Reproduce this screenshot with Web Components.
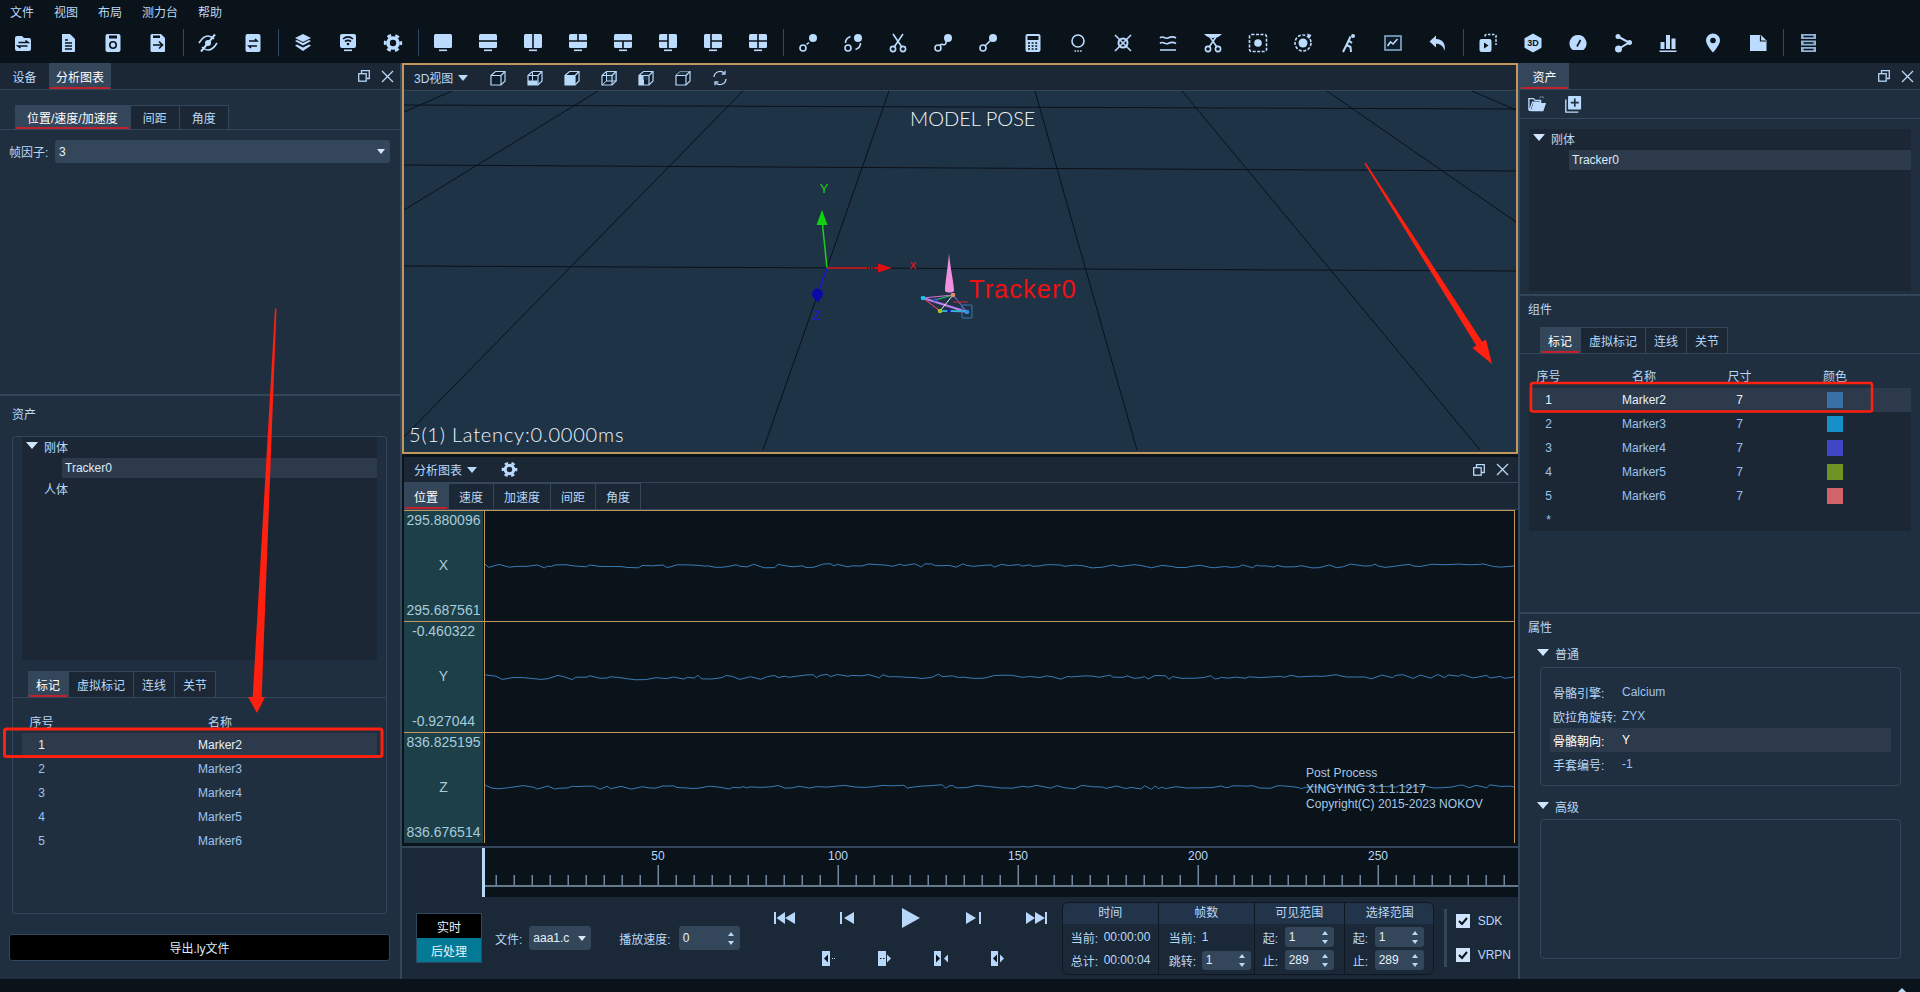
<!DOCTYPE html>
<html lang="zh">
<head>
<meta charset="utf-8">
<title>XINGYING</title>
<style>
  html, body { margin: 0; height: 100%; overflow: hidden; background: #0a121a; }
  body { font: 12px "Liberation Sans", "Noto Sans CJK SC", sans-serif; color: #b8d8f8; }
</style>
</head>
<body>
<xy-app>
  <xy-menubar slot="menu" items="文件,视图,布局,测力台,帮助"></xy-menubar>
  <xy-toolbar slot="menu"></xy-toolbar>
  <xy-left-dock slot="left"></xy-left-dock>
  <xy-view3d slot="center"></xy-view3d>
  <xy-chart-panel slot="center"></xy-chart-panel>
  <xy-timeline slot="center"></xy-timeline>
  <xy-transport slot="center"></xy-transport>
  <xy-right-dock slot="right"></xy-right-dock>
  <xy-marks slot="over"></xy-marks>
</xy-app>

<script>
// shared colours
const PANEL = '#202f3f', BAR = '#1b2735', DARK = '#0a121a', LINE = '#34465a', HILITE = '#2d3a4b', ORANGE = '#c2965f';

// small base class, every element renders once when it is attached
class XyBase extends HTMLElement {
  connectedCallback() {
    if (this.shadowRoot) return;
    this.attachShadow({ mode: 'open' });
    this.shadowRoot.innerHTML = `<style>${this.css()}</style>${this.html()}`;
  }
  css() { return ''; }
  html() { return '<slot></slot>'; }
  attr(name, def) { return this.hasAttribute(name) ? this.getAttribute(name) : def; }
}

// toolbar icons, 20x20. class k = cut out in the bar colour, class s = outline
const mon = (cuts) => `<rect x="1" y="1" width="18" height="14" rx="1.5"/><rect x="6" y="16.5" width="8" height="1.6"/><path class="k" d="${cuts}"/>`;
const ring = '<circle class="s" cx="5" cy="15" r="3"/><circle cx="15" cy="5" r="4"/>';
const snips = '<circle class="s" cx="5" cy="16" r="2.6"/><circle class="s" cx="15" cy="16" r="2.6"/>';
const ICONS = {
  openswap: '<path d="M2 5a2 2 0 0 1 2-2h5l2 2h5a2 2 0 0 1 2 2v9a2 2 0 0 1-2 2H4a2 2 0 0 1-2-2z"/><path class="k" d="M5.5 9.5H15L12.5 7.5M14.5 13H5l2.5 2"/>',
  doc: '<path d="M4 1h8l5 5v12a1 1 0 0 1-1 1H4z"/><path class="k" d="M7 10h7M7 13h7M7 16h7M7 7h3"/>',
  saveas: '<rect x="2.5" y="1" width="15" height="18" rx="2"/><rect class="c" x="6" y="2.5" width="8" height="3"/><circle class="k" cx="10" cy="12" r="3.2"/>',
  saveto: '<path d="M4 1h9l4 4v13a1 1 0 0 1-1 1H4a1.5 1.5 0 0 1-1.5-1.5v-15A1.5 1.5 0 0 1 4 1z"/><rect class="c" x="5" y="2.5" width="7" height="2.5"/><path class="k" d="M5 12h9.5M11 8.5l3.5 3.5-3.5 3.5"/>',
  eyeoff: '<path class="s" d="M1 10c3-5 6-7 9-7 2 0 4 1 6 3M19 10c-3 5-6 7-9 7-2 0-4-1-6-3"/><circle cx="10" cy="10" r="3"/><path class="s" style="stroke-width:2" d="M17 1.5L3 18.5"/>',
  swapdoc: '<rect x="2.5" y="1" width="15" height="18" rx="2"/><path class="k" d="M6 8h8l-2-2M14 13H6l2 2"/>',
  layers: '<path d="M10 1l8 4-8 4-8-4z"/><path d="M2 8l2-1 6 3 6-3 2 1-8 4.5z"/><path d="M2 12.5l2-1 6 3 6-3 2 1L10 18z"/>',
  wifi: '<rect x="2" y="1" width="16" height="14" rx="2"/><rect x="6" y="16.5" width="8" height="1.6"/><path class="k" d="M5 6c3-2.5 7-2.5 10 0M7 8.5c2-1.5 4-1.5 6 0"/><circle class="c" cx="10" cy="11" r="1.3"/>',
  gear: '<circle class="s" style="stroke-width:3.6" cx="10" cy="10" r="5"/><circle class="s" style="stroke-width:2.8" cx="10" cy="10" r="7.8" stroke-dasharray="4 4.17" stroke-dashoffset="2"/>',
  l1: mon(''), l2: mon('M1 8h18'), l3: mon('M10 1v14'), l4: mon('M10 1v7M1 8h18'), l5: mon('M1 8h18M10 8v7'),
  l6: mon('M10 1v14M1 8h9'), l7: mon('M8 1v14M8 8h11'), l8: mon('M10 1v14M1 8h18'),
  j1: ring + '<path class="s" d="M8.5 11.5l2.5-2"/>',
  j2: ring + '<path class="s" d="M2.5 10c0-3 2-5.5 5-6.5M17.5 10c0 3-2 5.5-5 6.5"/>',
  cut: snips + '<path class="s" d="M6.5 13.5L15 1M13.5 13.5L5 1"/>',
  j3: ring + '<path class="s" d="M7 12.5c2-3 3.5 1 5.5-1.5 1.5-2 0-2 .5-3"/>',
  j4: ring + '<path class="s" d="M7.2 12.8l5-5"/>',
  calc: '<rect x="2.5" y="1" width="15" height="18" rx="2"/><rect class="c" x="4.5" y="3" width="11" height="4"/><path class="k" stroke-dasharray="2 1.6" d="M5 10h10M5 13h10M5 16h10"/>',
  ringdots: '<circle class="s" cx="10" cy="8" r="6"/><path class="s" stroke-dasharray="1.6 1.2" d="M6.5 18h8"/>',
  xcircle: '<circle class="s" style="stroke-width:2" cx="10" cy="10" r="4.5"/><path class="s" d="M2 2l16 16M18 2L2 18"/>',
  waves: '<path class="s" d="M2 5c2.5-3 5 1.5 8 0s5-2 8 0M2 10.5c2.5-3 5 1.5 8 0s5-2 8 0M2 17h16"/>',
  cuttop: '<path d="M1 1h18c-3 3-6 4-9 4s-6-1-9-4z"/>' + snips + '<path class="s" d="M6.5 13.5L13 4M13.5 13.5L7 4"/>',
  dotbox: '<rect class="s" x="1.5" y="1.5" width="17" height="17" rx="2" stroke-dasharray="3 1.5"/><circle cx="10" cy="10" r="3.8"/>',
  dotcircle: '<circle class="s" cx="10" cy="10" r="8" stroke-dasharray="3 1.6"/><circle cx="10" cy="10" r="4.5"/><path d="M14 .5l4.5 1.5-2.5 4z"/>',
  stretch: '<circle cx="15" cy="3" r="2"/><path class="s" style="stroke-width:2" d="M12.5 3.5C11 7 9.5 10 8.5 12L5 19M8.5 12l4 2 .5 5M10 7l4 3"/>',
  linebox: '<rect x="2" y="3" width="16" height="14" fill="#0f1c2a" stroke="#8fb3d8" stroke-width="1.5"/><path class="s" d="M4.5 13l3-4 2.5 2 4.5-5"/>',
  undo: '<path d="M8 2.5L1.5 8.5 8 14.5v-3.8c4.5 0 7 2 8.5 7 1.5-6.5-1.5-11.7-8.5-11.7z"/>',
  play3: '<rect x="1.5" y="6" width="12" height="13" rx="2"/><path class="c" d="M6 9.5l4.5 3-4.5 3z"/><path class="s" stroke-dasharray="2.6 1.4" d="M7 3.5V3a1.5 1.5 0 0 1 1.5-1.5h8A1.5 1.5 0 0 1 18 3v9"/>',
  hex3d: '<path d="M10 .5l8.5 4.7v9.6L10 19.5l-8.5-4.7V5.2z"/><text x="10" y="13.3" text-anchor="middle" font-size="9" font-weight="bold" font-family="Liberation Sans" style="fill:#0a121a">3D</text>',
  gauge: '<path d="M10 2a8.5 8.5 0 0 0-6 14.5c.5.5 1 .5 1.5.5h9c.5 0 1 0 1.5-.5A8.5 8.5 0 0 0 10 2z"/><path class="k" d="M9 13.5l3.5-6.5"/>',
  share: '<circle cx="5" cy="3.5" r="2.5"/><circle cx="16.5" cy="9.5" r="2.5"/><circle cx="5.5" cy="16" r="3.5"/><path class="s" style="stroke-width:2" d="M5 3.5l11 6-10.5 6.5"/>',
  bars: '<rect x="2.5" y="9" width="4" height="7"/><rect x="8" y="2" width="4" height="14"/><rect x="13.5" y="5.5" width="4" height="10.5"/><rect x="1.5" y="17.5" width="17" height="1.5"/>',
  pin: '<path d="M10 .5a7 7 0 0 0-7 7c0 4.5 7 12 7 12s7-7.5 7-12a7 7 0 0 0-7-7z"/><circle class="c" cx="10" cy="7.5" r="2.8"/>',
  fold: '<path d="M2 2h11l5.5 5.5V18H2z"/><path class="k" style="stroke-width:1.2" d="M12.5 2.5V8H18"/>',
  server: '<g fill="#8fb3d8"><rect x="3" y="1" width="15" height="5"/><rect x="3" y="7.5" width="15" height="5"/><rect x="3" y="14" width="15" height="5"/></g><path class="k" d="M5.5 3.5h10M5.5 10h10M5.5 16.5h10"/>'
};
const TOOLS = 'openswap doc saveas saveto | eyeoff swapdoc | layers wifi gear | l1 l2 l3 l4 l5 l6 l7 l8 | j1 j2 cut j3 j4 calc ringdots xcircle waves cuttop dotbox dotcircle stretch linebox undo | play3 hex3d gauge share bars pin fold | server';
const ICON_CSS = `svg{display:block;fill:currentColor}
  .k{fill:none;stroke:${DARK};stroke-width:1.6}
  .c{fill:${DARK}}
  .s{fill:none;stroke:currentColor;stroke-width:1.6}`;

class XyApp extends XyBase {
  css() { return `
    :host { display: block; position: relative; width: 1920px; height: 992px; overflow: hidden; background: ${DARK}; }
    .wrap { display: flex; flex-direction: column; height: 100%; }
    .main { flex: 0 0 916px; display: flex; min-height: 0; }
    .center { width: 1116px; flex: none; display: flex; flex-direction: column; background: ${DARK}; }
    .status { flex: 1; position: relative; }
    .status i { position: absolute; left: 1897px; top: 9px; border: 5px solid transparent; border-top: 0; border-bottom: 5px solid #b8d8f8; }
  `; }
  html() { return `<div class="wrap">
      <slot name="menu"></slot>
      <div class="main"><slot name="left"></slot><div class="center"><slot name="center"></slot></div><slot name="right"></slot></div>
      <div class="status"><i></i></div>
    </div><slot name="over"></slot>`; }
}

class XyMenubar extends XyBase {
  css() { return `
    :host { display: flex; height: 22px; background: ${DARK}; padding-left: 10px; align-items: center; color: #b8d8f8; }
    span { margin-right: 20px; }
  `; }
  html() { return this.attr('items', '').split(',').map(t => `<span>${t}</span>`).join(''); }
}

class XyToolbar extends XyBase {
  css() { return `
    :host { display: flex; height: 41px; background: ${DARK}; color: #bcdcff; align-items: center; }
    .b { width: 45px; display: flex; justify-content: center; }
    .sep { width: 1px; height: 27px; background: #2b4a68; margin: 0 1px 0 3px; }
    ${ICON_CSS}
  `; }
  html() {
    return TOOLS.split(' ').map(n => n === '|' ? '<div class="sep"></div>'
      : `<div class="b"><svg width="20" height="20" viewBox="0 0 20 20">${ICONS[n]}</svg></div>`).join('');
  }
}

// restore + close buttons in the corner of a dock
class XyWinButtons extends XyBase {
  css() { return `:host { display: flex; gap: 11px; align-items: center; color: #b8d8f8; } svg { display: block; fill: none; stroke: currentColor; }`; }
  html() { return `
    <svg width="12" height="12" viewBox="0 0 12 12" stroke-width="1.3"><rect x=".7" y="3.7" width="7.5" height="7.5"/><path d="M3.5 3.5V.7h7.8v7.8H8.5"/></svg>
    <svg width="13" height="13" viewBox="0 0 13 13" stroke-width="1.3"><path d="M1 1l11 11M12 1L1 12"/></svg>`; }
}

// tab strip used everywhere: items is a comma list, pads the padding per tab
class XyTabs extends XyBase {
  css() { return `
    :host { display: flex; box-sizing: border-box; border-bottom: 1px solid ${LINE}; background: ${this.attr('bg', 'transparent')}; padding-left: ${this.attr('indent', 0)}px; height: ${this.attr('h', 25)}px; }
    .t { box-sizing: border-box; display: flex; align-items: center; justify-content: center; color: #b8d8f8; background: ${BAR}; border-top: 1px solid ${LINE}; border-right: 1px solid ${LINE}; height: 100%; position: relative; }
    .t.on { background: ${LINE}; color: #fff; }
    .t.on::after { content: ""; position: absolute; left: 1px; right: 1px; bottom: 0; height: 2px; background: #c4202c; }
    :host([flat]) .t { border: 0; }
    .end { margin-left: auto; align-self: center; padding-right: 6px; }
  `; }
  html() {
    const on = +this.attr('active', 0), pads = this.attr('pads', '10').split(',');
    return this.attr('items', '').split(',').map((t, i) => {
      const p = pads[i] || pads[0];
      return `<div class="t ${i === on ? 'on' : ''}" style="padding:0 ${p}px">${t}</div>`;
    }).join('') + '<div class="end"><slot></slot></div>';
  }
}

class XySpin extends XyBase {
  css() { return `
    :host { display: flex; box-sizing: border-box; align-items: center; justify-content: space-between; height: ${this.attr('h', 20)}px; width: ${this.attr('w', 49)}px; background: ${LINE}; border-radius: 3px; padding: 0 6px 0 4px; color: #e6f1fb; }
    .a { display: flex; flex-direction: column; gap: 5px; }
    .a i { display: block; border: 3px solid transparent; border-top: 0; border-bottom: 4px solid #b8d8f8; }
    .a i + i { border-bottom: 0; border-top: 4px solid #b8d8f8; }
  `; }
  html() { return `<span>${this.attr('value', '')}</span><div class="a"><i></i><i></i></div>`; }
}

class XyCombo extends XyBase {
  css() { return `
    :host { display: flex; box-sizing: border-box; align-items: center; justify-content: space-between; height: ${this.attr('h', 24)}px; width: ${this.attr('w', 100)}px; background: ${LINE}; border-radius: 3px; padding: 0 5px 0 4px; color: #e6f1fb; }
    i { border: 4px solid transparent; border-bottom: 0; border-top: 5px solid #d8e8f8; }
  `; }
  html() { return `<span>${this.attr('value', '')}</span><i></i>`; }
}

class XyTree extends XyBase {
  css() { return `
    :host { display: block; box-sizing: border-box; background: ${BAR}; height: ${this.attr('h', 160)}px; }
    .r { display: flex; align-items: center; height: 20px; padding-left: 22px; position: relative; }
    .r.top { height: 21px; box-sizing: border-box; padding-bottom: 2px; }
    .r i { position: absolute; left: 4px; top: 5px; border: 6px solid transparent; border-bottom: 0; border-top: 7px solid #d0e6fc; }
    .sel { background: ${HILITE}; margin-left: 40px; padding-left: 3px; color: #dcecfb; }
  `; }
  html() {
    return `<div class="r top"><i></i>刚体</div><div class="r sel">Tracker0</div>` +
      (this.hasAttribute('people') ? '<div class="r">人体</div>' : '');
  }
}

// marker list. cols gives the grid, dark/full switch on the extra columns of the right dock
class XyMarkerTable extends XyBase {
  css() { return `
    :host { display: block; }
    .r { display: grid; grid-template-columns: ${this.attr('cols', '39px 1fr')}; height: 24px; align-items: center; text-align: center; color: #9cc4ef; }
    .h { color: #b8d8f8; height: ${this.attr('head', 33)}px; align-items: end; padding-bottom: ${this.attr('foot', 3)}px; box-sizing: border-box; }
    .body { background: ${this.hasAttribute('dark') ? BAR : 'transparent'}; }
    .sel { background: ${HILITE}; color: #e6f1fb; }
    .sw { display: block; width: 16px; height: 16px; margin: auto; }
    .star { height: 23px; }
  `; }
  html() {
    const full = this.hasAttribute('full');
    const sw = ['#3a70a6', '#1590ca', '#4146c6', '#709424', '#d0646a'];
    const head = full ? ['序号', '名称', '尺寸', '颜色'] : ['序号', '名称'];
    let rows = '';
    for (let i = 0; i < 5; i++) {
      rows += `<div class="r ${i === 0 ? 'sel' : ''}"><span>${i + 1}</span><span>Marker${i + 2}</span>` +
        (full ? `<span>7</span><span><b class="sw" style="background:${sw[i]}"></b></span>` : '') + '</div>';
    }
    if (full) rows += '<div class="r star"><span>*</span></div>';
    return `<div class="r h">${head.map(t => `<span>${t}</span>`).join('')}</div><div class="body">${rows}</div>`;
  }
}

class XyLeftDock extends XyBase {
  css() { return `
    :host { display: flex; flex-direction: column; width: 402px; flex: none; box-sizing: border-box; background: ${PANEL}; border-right: 2px solid ${LINE}; }
    .top { height: 304px; flex: none; padding-top: 15px; box-sizing: border-box; }
    .frame { display: flex; align-items: center; margin-top: 10px; padding: 0 10px 0 9px; }
    .frame span { width: 46px; }
    .split { height: 2px; background: ${LINE}; flex: none; }
    .title { height: 40px; box-sizing: border-box; padding: 12px 0 0 12px; line-height: 14px; }
    .group { margin: 0 13px 0 12px; height: 478px; box-sizing: border-box; border: 1px solid ${LINE}; border-radius: 3px; padding: 0 9px; }
    .tabs { margin: 11px -9px 0; }
    .exp { margin: 20px 10px 0 9px; height: 27px; box-sizing: border-box; background: #000; border: 1px solid #2f4760; border-radius: 3px; color: #dcecfb; display: flex; align-items: center; justify-content: center; }
  `; }
  html() { return `
    <xy-tabs flat items="设备,分析图表" active="1" pads="12.5,7" bg="${BAR}" h="27"><xy-win-buttons></xy-win-buttons></xy-tabs>
    <div class="top">
      <xy-tabs items="位置/速度/加速度,间距,角度" pads="12" indent="15"></xy-tabs>
      <div class="frame"><span>帧因子:</span><xy-combo value="3" w="335" h="23"></xy-combo></div>
    </div>
    <div class="split"></div>
    <div class="title">资产</div>
    <div class="group">
      <xy-tree people h="223"></xy-tree>
      <div class="tabs"><xy-tabs items="标记,虚拟标记,连线,关节" pads="8" indent="15" h="27"></xy-tabs></div>
      <xy-marker-table cols="39px 318px" head="35"></xy-marker-table>
    </div>
    <div class="exp">导出.ly文件</div>`; }
}

class XyRightDock extends XyBase {
  css() { return `
    :host { display: flex; flex-direction: column; width: 402px; flex: none; box-sizing: border-box; background: ${PANEL}; border-left: 2px solid ${LINE}; color: #b8d8f8; }
    .tools { height: 29px; flex: none; box-sizing: border-box; border-bottom: 1px solid ${LINE}; display: flex; align-items: center; padding-left: 8px; gap: 18px; color: #bcdcff; }
    svg { display: block; fill: currentColor; }
    .p { flex: none; box-sizing: border-box; }
    .a { height: 175px; padding: 10px 9px 0; }
    .split { height: 2px; flex: none; background: ${LINE}; }
    .title { height: 31px; box-sizing: border-box; padding: 7px 0 0 8px; line-height: 14px; }
    .b { height: 285px; }
    .tbl { margin: 0 9px; }
    .sec { display: flex; align-items: center; height: 24px; padding-left: 35px; position: relative; }
    .sec i { position: absolute; left: 17px; top: 8px; border: 6px solid transparent; border-bottom: 0; border-top: 7px solid #d0e6fc; }
    .box { margin: 0 19px 0 20px; border: 1px solid ${LINE}; border-radius: 4px; box-sizing: border-box; }
    .box.one { height: 119px; padding: 12px 9px 0; margin-top: 2px; margin-bottom: 8px; }
    .box.two { height: 140px; margin-top: 1px; }
    .kv { display: grid; grid-template-columns: 69px 1fr; height: 24px; align-items: center; padding-left: 3px; color: #b8d8f8; }
    .kv b { font-weight: 400; color: #9cc4ef; }
    .kv.on { background: ${HILITE}; color: #fff; }
    .kv.on b { color: #fff; }
  `; }
  html() { return `
    <xy-tabs flat items="资产" pads="12.5" bg="${BAR}" h="27"><xy-win-buttons></xy-win-buttons></xy-tabs>
    <div class="tools">
      <svg width="18" height="18" viewBox="0 0 20 20"><path d="M1 17V4h5l2 2h6v2H5L2 17h14l3-8" fill="none" stroke="currentColor" stroke-width="1.5"/><path d="M3 18l3-9h14l-3 9z"/><path d="M13 3c2-2 4-1 5 1" fill="none" stroke="currentColor" stroke-dasharray="2 1"/></svg>
      <svg width="18" height="18" viewBox="0 0 20 20"><path d="M2 5v14h14" fill="none" stroke="currentColor" stroke-width="1.5"/><rect x="4.5" y="1" width="14.5" height="15" rx="1"/><path d="M12 4v9M7.5 8.5h9" stroke="${PANEL}" stroke-width="1.8"/></svg>
    </div>
    <div class="p a"><xy-tree h="162"></xy-tree></div>
    <div class="split"></div>
    <div class="title">组件</div>
    <div class="p b">
      <xy-tabs items="标记,虚拟标记,连线,关节" pads="8" indent="20" h="27"></xy-tabs>
      <div class="tbl"><xy-marker-table full dark cols="39px 152px 39px 152px" head="34" foot="4"></xy-marker-table></div>
    </div>
    <div class="split"></div>
    <div class="title" style="height:27px">属性</div>
    <div class="sec"><i></i>普通</div>
    <div class="box one">
      <div class="kv">骨骼引擎:<b>Calcium</b></div>
      <div class="kv">欧拉角旋转:<b>ZYX</b></div>
      <div class="kv on">骨骼朝向:<b>Y</b></div>
      <div class="kv">手套编号:<b>-1</b></div>
    </div>
    <div class="sec"><i></i>高级</div>
    <div class="box two"></div>`; }
}

// small cube buttons of the 3D view
const cube = (inner) => `<svg width="16" height="16" viewBox="0 0 16 16"><path d="M1 5.5L5.5 1.5H15V11L11 15H1z" fill="#0f1c2a" stroke="currentColor" stroke-width="1.2"/>${inner}<path d="M1 5.5H11V15M11 5.5L15 1.5" fill="none" stroke="currentColor" stroke-width="1.2"/></svg>`;
const CUBES = [
  cube(''),
  cube('<path d="M1 10.5h9.5V15H1z" fill="currentColor"/><path d="M5.5 1.5v9M5.5 10.5L1 15" fill="none" stroke="currentColor"/>'),
  cube('<rect x="1" y="5.5" width="10" height="9.5" fill="currentColor"/>'),
  cube('<rect x="5.5" y="1.5" width="9.5" height="9.5" fill="#1f3347" stroke="currentColor"/><path d="M5.5 11L1 15" stroke="currentColor"/>'),
  cube('<rect x="1" y="5.5" width="5" height="9.5" fill="currentColor"/><rect x="5.5" y="3" width="4.5" height="7" fill="#1f3347"/>'),
  cube('<path d="M1 5.5L5.5 1.5H15L11 5.5z" fill="#1f3347"/>')
];

class XyView3d extends XyBase {
  css() { return `
    :host { display: flex; flex-direction: column; box-sizing: border-box; height: 391px; flex: none; border: 2px solid ${ORANGE}; background: #1f3347; }
    .bar { height: 26px; flex: none; box-sizing: border-box; background: ${BAR}; border-bottom: 1px solid ${LINE}; display: flex; align-items: center; padding-left: 10px; color: #b8d8f8; }
    .arr { border: 5px solid transparent; border-bottom: 0; border-top: 6px solid #b8d8f8; margin: 0 22px 0 5px; }
    .ic { display: flex; gap: 21px; }
    .ic svg { display: block; }
    .cv { flex: 1; position: relative; overflow: hidden; }
    .cv svg { position: absolute; inset: 0; display: block; }
    .pose { position: absolute; left: 506px; top: 17px; font: 300 20px Lato, "Liberation Sans", sans-serif; color: #f4f8fc; line-height: 20px; white-space: nowrap; }
    .lat { position: absolute; left: 5px; bottom: 7px; font: 300 20px Lato, "Liberation Sans", sans-serif; color: #eef4fa; letter-spacing: .8px; white-space: nowrap; line-height: 22px; }
  `; }
  html() {
    const ln = (a, b, c, d, w = 1) => `<line x1="${a}" y1="${b}" x2="${c}" y2="${d}" stroke="#0b1118" stroke-width="${w}"/>`;
    const pts = [[923,298],[953,295],[967,312],[940,311]];
    return `
    <div class="bar"><span>3D视图</span><i class="arr"></i><div class="ic">${CUBES.join('')}
      <svg width="16" height="16" viewBox="0 0 16 16" fill="none" stroke="currentColor" stroke-width="1.3"><path d="M2 7a6 6 0 0 1 10.5-3.5M14 9a6 6 0 0 1-10.5 3.5"/><path d="M13 .8v3.4H9.6M3 15.2v-3.4h3.4"/></svg></div></div>
    <div class="cv">
      <svg width="1112" height="361" viewBox="404 91 1112 361">
        ${ln(404,105,1516,109)}${ln(404,165,1516,171)}${ln(404,266,1516,271)}
        ${ln(452,91,404,112)}${ln(598,91,404,210)}${ln(743,91,404,437)}${ln(889,91,763,450)}
        ${ln(1035,91,1137,450)}${ln(1182,91,1480,450)}${ln(1327,91,1516,222)}${ln(1472,91,1516,110)}
        <line x1="827" y1="268" x2="822" y2="220" stroke="#18d018" stroke-width="1.5"/>
        <path d="M822 210l5.5 15h-11z" fill="#10d010"/>
        <text x="824" y="193" fill="#18d018" font-size="13" text-anchor="middle" font-family="Liberation Sans">Y</text>
        <line x1="827" y1="268" x2="880" y2="268" stroke="#e01818" stroke-width="1.5" stroke-dasharray="40 1 2 1 2 1"/>
        <path d="M878 263.5l14 4.5-14 4.5z" fill="#e01010"/>
        <text x="913" y="269" fill="#e01818" font-size="13" text-anchor="middle" font-family="Liberation Sans">x</text>
        <line x1="827" y1="268" x2="816" y2="298" stroke="#1818e0" stroke-width="1.5"/>
        <path d="M812 294a5.5 5.5 0 0 1 11 0c0 3-4 6-5 9-1-3-6-5-6-9z" fill="#0a0aa8"/>
        <text x="817" y="320" fill="#1818e0" font-size="13" text-anchor="middle" font-family="Liberation Sans">Z</text>
        <path d="M949 253c1 14 5 30 5 38-2 2-7 2-9 0 0-8 3-24 4-38z" fill="#f090e0"/>
        <path d="M923 298L953 295L967 312L940 311Z" fill="none" stroke="#d870d8" stroke-width="1"/>
        <path d="M923 298L967 312" stroke="#c080f0" stroke-width="2"/>
        <path d="M923 298L940 311" stroke="#e03048" stroke-width="1"/>
        <path d="M940 311L953 295" stroke="#f0f0f0" stroke-width="1"/>
        <path d="M935 300L953 295" stroke="#30d070" stroke-width="1"/>
        <path d="M940 311H967" stroke="#18c8d8" stroke-width="1.5"/>
        <path d="M953 295L967 312" stroke="#4060d0" stroke-width="1"/>
        <path d="M953 302H968" stroke="#e02020" stroke-width="1"/>
        ${['#18c0f0','#e88870','#3090e0','#a8c020'].map((c, i) => `<circle cx="${pts[i][0]}" cy="${pts[i][1]}" r="2.3" fill="${c}"/>`).join('')}
        <circle cx="949" cy="311" r="1.8" fill="#1010c0"/><circle cx="935" cy="300" r="1.8" fill="#3050d0"/>
        <rect x="962" y="305" width="10" height="13" rx="1" fill="none" stroke="#3a78b0" stroke-width="1"/>
        <text x="969" y="298" fill="#ee1111" font-size="25.5" letter-spacing="1" font-family="Liberation Sans">Tracker0</text>
      </svg>
      <div class="pose">MODEL POSE</div>
      <div class="lat">5(1) Latency:0.0000ms</div>
    </div>`;
  }
}

// one chart strip: value range on the left, wave to the right
class XyChartRow extends XyBase {
  css() { return `
    :host { display: grid; grid-template-columns: 79px 2px 1fr; height: 111px; box-sizing: border-box; border-top: 1px solid ${ORANGE}; }
    .l { background: #1d3f47; display: flex; flex-direction: column; justify-content: space-between; align-items: center; color: #a8cbdc; font-size: 14px; padding: 1px 0 3px; box-sizing: border-box; white-space: nowrap; overflow: hidden; line-height: 16px; }
    .v { background: ${ORANGE}; width: 1px; justify-self: end; }
    .c { position: relative; min-width: 0; }
    svg { display: block; width: 100%; height: 100%; }
  `; }
  html() { return `
    <div class="l"><span>${this.attr('max')}</span><span>${this.attr('axis')}</span><span>${this.attr('min')}</span></div>
    <div class="v"></div>
    <div class="c"><svg viewBox="0 0 1032 110" preserveAspectRatio="none"><polyline fill="none" stroke="#3a7bb8" stroke-width="1" points="${this.wave()}"/></svg><slot></slot></div>`; }
  wave() {
    // noise from a seeded generator so the strip looks like the same data every time
    let s = +this.attr('seed', 1), out = [], x = 0;
    const amp = +this.attr('amp', 2), mid = +this.attr('mid', 55);
    const rnd = () => (s = (s * 16807) % 2147483647) / 2147483647;
    while (x <= 1032) {
      const y = mid + (rnd() - .5) * amp * 1.8 + Math.sin(x / 90) * .6;
      out.push(x.toFixed(1) + ',' + y.toFixed(1));
      x += 3.5 + Math.floor(rnd() * 3) * 3.5;
    }
    out.push('1032,' + mid);
    return out.join(' ');
  }
}

class XyChartPanel extends XyBase {
  css() { return `
    :host { display: block; height: 392px; flex: none; box-sizing: border-box; padding: 3px 0 0 2px; background: ${DARK}; }
    .t { height: 26px; box-sizing: border-box; background: ${BAR}; border-bottom: 1px solid ${LINE}; display: flex; align-items: center; padding: 0 6px 0 10px; }
    .arr { border: 5px solid transparent; border-bottom: 0; border-top: 6px solid #b8d8f8; margin-left: 5px; }
    .t svg { margin-left: 24px; color: #bcdcff; fill: currentColor; display: block; }
    .end { margin-left: auto; padding-right: 3px; }
    .rows { padding-right: 3px; }
    .note { position: absolute; left: 821px; top: 33px; line-height: 15.5px; font-size: 12.1px; color: #a8c8e4; white-space: nowrap; }
    .edge { position: relative; border-right: 1px solid ${ORANGE}; }
    ${ICON_CSS}
  `; }
  html() { return `
    <div class="t"><span>分析图表</span><i class="arr"></i><svg width="17" height="17" viewBox="0 0 20 20">${ICONS.gear}</svg><div class="end"><xy-win-buttons></xy-win-buttons></div></div>
    <xy-tabs items="位置,速度,加速度,间距,角度" pads="10" bg="${BAR}" h="27"></xy-tabs>
    <div class="rows"><div class="edge">
      <xy-chart-row max="295.880096" axis="X" min="295.687561" seed="17"></xy-chart-row>
      <xy-chart-row max="-0.460322" axis="Y" min="-0.927044" seed="4242" amp="2.5"></xy-chart-row>
      <xy-chart-row max="836.825195" axis="Z" min="836.676514" seed="991" mid="54">
        <div class="note">Post Process<br>XINGYING 3.1.1.1217<br>Copyright(C) 2015-2023 NOKOV</div>
      </xy-chart-row>
    </div></div>`; }
}

class XyTimeline extends XyBase {
  css() { return `
    :host { display: block; height: 51px; flex: none; box-sizing: border-box; border-top: 2px solid ${LINE}; background: ${DARK}; }
    svg { display: block; }
  `; }
  html() {
    // local x = page x - 402
    let ticks = '', labels = '';
    for (let f = 5; f <= 285; f += 5) {
      const x = 76 + f * 3.6, big = f % 50 === 0;
      ticks += `<rect x="${x - .5}" y="${big ? 17 : 27}" width="1.5" height="${big ? 20 : 10}" fill="#7288a0"/>`;
      if (big) labels += `<text x="${x}" y="12" text-anchor="middle" fill="#b8d8f8" font-size="12" font-family="Liberation Sans">${f}</text>`;
    }
    return `<svg width="1116" height="49" viewBox="0 0 1116 49">
      <rect width="80" height="49" fill="#1b2837"/>
      ${labels}${ticks}
      <rect x="80" y="37" width="1036" height="2" fill="#65788e"/>
      <rect x="80" y="0" width="3" height="49" fill="#b8d8f8"/>
    </svg>`;
  }
}

// the table with time, frames, visible and selected range
class XyRangeTable extends XyBase {
  css() { return `
    :host { display: grid; grid-template-columns: 96px 96px 90px 90px; width: 372px; height: 73px; flex: none; box-sizing: border-box; border: 1px solid #0f1822; border-radius: 6px; overflow: hidden; }
    .col { border-right: 1px solid #0f1822; display: flex; flex-direction: column; min-width: 0; }
    .col:last-child { border-right: 0; }
    .h { height: 21px; flex: none; background: #22344a; text-align: center; line-height: 21px; }
    .b { flex: 1; display: flex; flex-direction: column; justify-content: space-around; padding: 2px 0; }
    .r { display: flex; align-items: center; padding-left: 8px; height: 22px; }
    .r em { font-style: normal; width: 33px; flex: none; }
    .col.narrow .r em { width: 22px; }
    .clip { width: 47px; white-space: nowrap; color: #b8d8f8; }
    .r.tight { padding-left: 10px; }
  `; }
  html() { return `
    <div class="col"><div class="h">时间</div><div class="b">
      <div class="r"><em>当前:</em><span class="clip">00:00:00</span></div>
      <div class="r"><em>总计:</em><span class="clip">00:00:04</span></div></div></div>
    <div class="col"><div class="h">帧数</div><div class="b">
      <div class="r tight"><em>当前:</em><span>1</span></div>
      <div class="r tight"><em>跳转:</em><xy-spin value="1" h="19"></xy-spin></div></div></div>
    <div class="col narrow"><div class="h">可见范围</div><div class="b">
      <div class="r"><em>起:</em><xy-spin value="1"></xy-spin></div>
      <div class="r"><em>止:</em><xy-spin value="289"></xy-spin></div></div></div>
    <div class="col narrow"><div class="h">选择范围</div><div class="b">
      <div class="r"><em>起:</em><xy-spin value="1"></xy-spin></div>
      <div class="r"><em>止:</em><xy-spin value="289"></xy-spin></div></div></div>`; }
}

class XyCheck extends XyBase {
  css() { return `
    :host { display: flex; align-items: center; gap: 8px; color: #b8d8f8; }
    .b { width: 14px; height: 14px; background: #cfe4fa; display: flex; }
    svg { display: block; }
  `; }
  html() { return `<div class="b"><svg width="14" height="14" viewBox="0 0 14 14"><path d="M3 7l3 3 5-6" fill="none" stroke="#0a121a" stroke-width="2"/></svg></div><slot></slot>`; }
}

class XyTransport extends XyBase {
  css() { return `
    :host { display: flex; align-items: center; flex: 1; box-sizing: border-box; padding: 0 0 0 14px; background: #1b2837; color: #b8d8f8; white-space: nowrap; }
    .mode { width: 66px; height: 50px; flex: none; box-sizing: border-box; border: 1px solid #2f4760; display: flex; flex-direction: column; margin-right: 13px; }
    .mode div { flex: 1; display: flex; align-items: center; justify-content: center; color: #e8f2fb; }
    .mode .a { background: #000; }
    .mode .b { background: #027a95; }
    .lab { margin-right: 7px; }
    .play { width: 300px; flex: none; margin: 0 1px 0 21px; display: flex; flex-direction: column; gap: 16px; align-items: center; }
    .row { display: flex; align-items: center; justify-content: center; }
    .row svg { display: block; fill: #b8d8fb; }
    .one { height: 24px; gap: 39px; }
    .one div { width: 24px; display: flex; justify-content: center; }
    .two { height: 24px; gap: 34.5px; padding-left: 5px; }
    .two div { width: 22px; display: flex; justify-content: center; }
    .sep { width: 3px; height: 58px; flex: none; background: ${LINE}; margin: 0 9px 0 10px; }
    .chk { display: flex; flex-direction: column; gap: 20px; }
  `; }
  html() {
    const svg = (w, h, d) => `<div><svg width="${w}" height="${h}" viewBox="0 0 ${w} ${h}"><path d="${d}"/></svg></div>`;
    const side = (w, d, k) => `<div><svg width="${w}" height="15" viewBox="0 0 ${w} 15"><path d="${d}"/><path d="${k}" style="fill:#0a121a"/></svg></div>`;
    return `
    <div class="mode"><div class="a">实时</div><div class="b">后处理</div></div>
    <span class="lab">文件:</span><xy-combo value="aaa1.c" w="62"></xy-combo>
    <span class="lab" style="margin-left:28px;margin-right:8px">播放速度:</span><xy-spin value="0" w="61" h="24"></xy-spin>
    <div class="play">
      <div class="row one">
        ${svg(21, 12, 'M0 0h2v12H0zM2.5 6L11 0v12zM11 6l10-6v12z')}
        ${svg(15, 12, 'M0 0h2v12H0zM4 6l10-6v12z')}
        ${svg(18, 20, 'M0 0l18 10L0 20z')}
        ${svg(15, 12, 'M0 0l10 6-10 6zM13 0h2v12h-2z')}
        ${svg(21, 12, 'M0 0l9 6-9 6zM9 0l10 6-10 6zM19 0h2v12h-2z')}
      </div>
      <div class="row two">
        ${side(14, 'M1 0h8v15H1zM11 7h1v1h-1zM13 7h1v1h-1z', 'M7 3.5L3 7.5l4 4z')}
        ${side(14, 'M0 0h8v15H0zM9 3.5l4 4-4 4z', 'M2 7h1.5v1H2zM5 7h1.5v1H5z')}
        ${side(14, 'M0 0h7v15H0zM14 3.5L10 7.5l4 4z', 'M2 3.5l4 4-4 4z')}
        ${side(14, 'M0 0h7v15H0zM9 3.5l4 4-4 4z', 'M6 3.5l-4 4 4 4z')}
      </div>
    </div>
    <xy-range-table></xy-range-table>
    <div class="sep"></div>
    <div class="chk"><xy-check>SDK</xy-check><xy-check>VRPN</xy-check></div>`;
  }
}

// the red hand drawn marks of the screenshot lie over everything
class XyMarks extends XyBase {
  css() { return `
    :host { position: absolute; inset: 0; pointer-events: none; display: block; }
    svg { display: block; }
  `; }
  html() { return `<svg width="1920" height="992" viewBox="0 0 1920 992">
    <path fill="#ff2010" d="M275 308.5h1.5L261.7 697H265L257 713 248 697h4.7z"/>
    <path fill="#ff2010" d="M1364.4 163.4L1365.6 162.6L1482.2 341.8L1486 339.4L1492 364L1472.4 348L1476.2 345.6Z"/>
    <rect x="4.5" y="729" width="377.5" height="27.5" rx="2" fill="none" stroke="#ff2010" stroke-width="3"/>
    <rect x="1531" y="383" width="341" height="28.5" rx="2" fill="none" stroke="#ff2010" stroke-width="2.5"/>
  </svg>`; }
}

customElements.define('xy-app', XyApp);
customElements.define('xy-menubar', XyMenubar);
customElements.define('xy-toolbar', XyToolbar);
customElements.define('xy-win-buttons', XyWinButtons);
customElements.define('xy-tabs', XyTabs);
customElements.define('xy-spin', XySpin);
customElements.define('xy-combo', XyCombo);
customElements.define('xy-tree', XyTree);
customElements.define('xy-marker-table', XyMarkerTable);
customElements.define('xy-left-dock', XyLeftDock);
customElements.define('xy-right-dock', XyRightDock);
customElements.define('xy-view3d', XyView3d);
customElements.define('xy-chart-row', XyChartRow);
customElements.define('xy-chart-panel', XyChartPanel);
customElements.define('xy-timeline', XyTimeline);
customElements.define('xy-range-table', XyRangeTable);
customElements.define('xy-check', XyCheck);
customElements.define('xy-transport', XyTransport);
customElements.define('xy-marks', XyMarks);
</script>
</body>
</html>
